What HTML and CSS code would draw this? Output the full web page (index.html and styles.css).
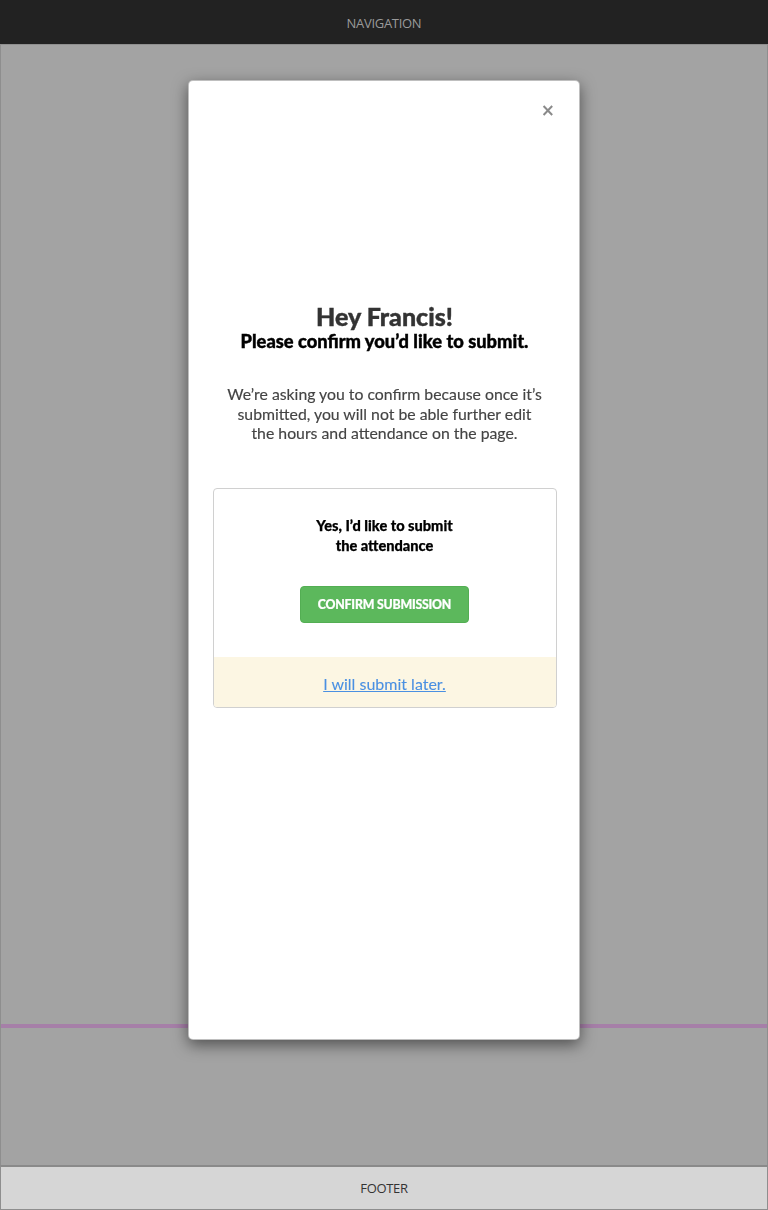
FILE: index.html
```html
<!DOCTYPE html>
<html>
<head>
<meta charset="utf-8">
<link rel="stylesheet" href="styles.css">
</head>
<body>
<div class="page">
  <header class="nav">NAVIGATION</header>
  <main class="main">
    <div class="rule"></div>
  </main>
  <footer class="footer">FOOTER</footer>
</div>

<div class="modal">
  <button class="close" aria-label="Close">×</button>
  <div class="modal-body">
    <h1 class="title">Hey Francis!</h1>
    <h2 class="subtitle">Please confirm you’d like to submit.</h2>
    <p class="desc">We’re asking you to confirm because once it’s submitted, you will not be able further edit the hours and attendance on the page.</p>
    <div class="card">
      <div class="card-top">
        <p class="card-text">Yes, I’d like to submit the attendance</p>
        <button class="btn-confirm">CONFIRM SUBMISSION</button>
      </div>
      <div class="card-bottom">
        <a class="later" href="#">I will submit later.</a>
      </div>
    </div>
  </div>
</div>
</body>
</html>
```
FILE: styles.css
```css
* { box-sizing: border-box; }
html, body { margin: 0; padding: 0; }
body {
  width: 768px;
  height: 1210px;
  background: #a3a3a3;
  font-family: Lato, "Open Sans", sans-serif;
  overflow: hidden;
}
.page {
  display: flex;
  flex-direction: column;
  height: 1210px;
}
.nav {
  height: 45px;
  padding-top: 1px;
  background: #222222;
  color: #9a9a9a;
  font-family: "Open Sans", sans-serif;
  font-size: 13px;
  display: flex;
  align-items: center;
  justify-content: center;
  border-bottom: 1px solid #8f8f8f;
  letter-spacing: -0.3px;
}
.main {
  flex: 1;
  background: #a3a3a3;
  border-left: 1px solid #8e8e8e;
  border-right: 1px solid #8e8e8e;
  display: flex;
  flex-direction: column;
  justify-content: flex-end;
  padding-bottom: 137px;
}
.rule {
  height: 4px;
  background: #a67fa8;
}
.footer {
  height: 45px;
  background: #d6d6d6;
  border-top: 2px solid #8a8a8a;
  border-left: 1px solid #8e8e8e;
  border-right: 1px solid #8e8e8e;
  border-bottom: 1px solid #8e8e8e;
  color: #333;
  font-family: "Open Sans", sans-serif;
  font-size: 13px;
  display: flex;
  align-items: center;
  justify-content: center;
  letter-spacing: -0.3px;
}
.modal {
  position: fixed;
  top: 80px;
  left: 188px;
  width: 392px;
  height: 960px;
  background: #fff;
  border-radius: 5px;
  border: 1px solid rgba(0,0,0,0.25);
  box-shadow: 0 5px 15px rgba(0,0,0,0.5);
}
.close {
  position: absolute;
  top: 19px;
  right: 24px;
  border: 0;
  background: none;
  padding: 0;
  font-family: "DejaVu Sans", sans-serif;
  font-size: 17px;
  line-height: 20px;
  font-weight: bold;
  color: #8a8a8a;
  cursor: pointer;
}
.modal-body {
  display: flex;
  flex-direction: column;
  align-items: center;
  padding: 221px 23px 0 24px;
  text-align: center;
}
.title {
  margin: 0;
  font-size: 25px;
  line-height: 28px;
  font-weight: 900;
  color: #333;
  -webkit-text-stroke: 0.4px #333;
}
.subtitle {
  margin: 0;
  font-size: 18.3px;
  line-height: 22px;
  font-weight: 900;
  color: #000;
  -webkit-text-stroke: 0.4px #000;
}
.desc {
  margin: 32px 0 0;
  width: 320px;
  font-size: 15.8px;
  line-height: 19.5px;
  color: #444;
  -webkit-text-stroke: 0.15px #444;
}
.card {
  margin-top: 45px;
  width: 344px;
  border: 1px solid #d0d0d0;
  border-radius: 4px;
  overflow: hidden;
}
.card-top {
  display: flex;
  flex-direction: column;
  align-items: center;
  padding: 27px 0 34px;
}
.card-text {
  margin: 0;
  width: 150px;
  font-size: 14.6px;
  line-height: 20px;
  font-weight: 900;
  color: #000;
  -webkit-text-stroke: 0.25px #000;
}
.btn-confirm {
  margin-top: 30px;
  width: 169px;
  height: 37px;
  background: #5cb85c;
  border: 1px solid #53ae53;
  border-radius: 4px;
  color: #fff;
  font-family: Lato, sans-serif;
  font-size: 12.3px;
  font-weight: 900;
  letter-spacing: -0.2px;
  -webkit-text-stroke: 0.2px #fff;
}
.card-bottom {
  height: 50px;
  padding-top: 3px;
  background: #fcf6e3;
  display: flex;
  align-items: center;
  justify-content: center;
}
.later {
  color: #4a90e2;
  font-size: 16px;
  text-decoration: underline;
  -webkit-text-stroke: 0.1px #4a90e2;
}
```
